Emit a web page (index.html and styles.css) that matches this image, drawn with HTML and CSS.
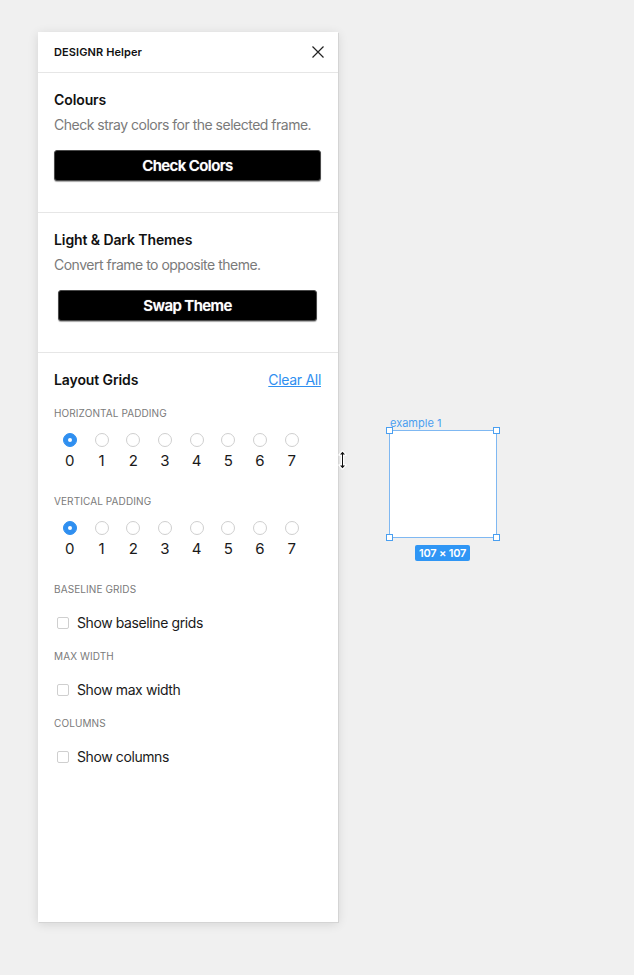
FILE: index.html
```html
<!DOCTYPE html>
<html lang="en">
<head>
  <meta charset="UTF-8" />
  <meta name="viewport" content="width=device-width, initial-scale=1.0" />
  <title>DESIGNR Helper</title>
  <link rel="stylesheet" href="styles.css">
</head>
<body>
  <div class="stage">
    <!-- Plugin panel -->
    <div class="panel">
      <header class="panel-head">
        <span class="panel-title">DESIGNR Helper</span>
        <svg class="close" width="12" height="12" viewBox="0 0 12 12" aria-label="Close">
          <path d="M0.5 0.5 L11.5 11.5 M11.5 0.5 L0.5 11.5" stroke="#222" stroke-width="1.2" fill="none" />
        </svg>
      </header>

      <section class="block">
        <h2>Colours</h2>
        <p class="desc">Check stray colors for the selected frame.</p>
        <button class="btn">Check Colors</button>
      </section>

      <section class="block">
        <h2>Light &amp; Dark Themes</h2>
        <p class="desc">Convert frame to opposite theme.</p>
        <button class="btn narrow">Swap Theme</button>
      </section>

      <section class="block grids">
        <div class="row-head">
          <h2>Layout Grids</h2>
          <a class="link" href="#">Clear All</a>
        </div>

        <div class="label first">Horizontal padding</div>
        <div class="radios">
          <label class="opt"><span class="radio on"></span>0</label>
          <label class="opt"><span class="radio"></span>1</label>
          <label class="opt"><span class="radio"></span>2</label>
          <label class="opt"><span class="radio"></span>3</label>
          <label class="opt"><span class="radio"></span>4</label>
          <label class="opt"><span class="radio"></span>5</label>
          <label class="opt"><span class="radio"></span>6</label>
          <label class="opt"><span class="radio"></span>7</label>
        </div>

        <div class="label">Vertical padding</div>
        <div class="radios">
          <label class="opt"><span class="radio on"></span>0</label>
          <label class="opt"><span class="radio"></span>1</label>
          <label class="opt"><span class="radio"></span>2</label>
          <label class="opt"><span class="radio"></span>3</label>
          <label class="opt"><span class="radio"></span>4</label>
          <label class="opt"><span class="radio"></span>5</label>
          <label class="opt"><span class="radio"></span>6</label>
          <label class="opt"><span class="radio"></span>7</label>
        </div>

        <div class="label">Baseline grids</div>
        <label class="check"><span class="box"></span>Show baseline grids</label>

        <div class="label tight">Max width</div>
        <label class="check"><span class="box"></span>Show max width</label>

        <div class="label tight">Columns</div>
        <label class="check"><span class="box"></span>Show columns</label>
      </section>
    </div>

    <!-- Canvas with the selected frame -->
    <div class="canvas">
      <svg class="cursor" width="9" height="20" viewBox="0 0 9 20">
        <path d="M4.5 1 L8 5 L5.5 5 L5.5 15 L8 15 L4.5 19 L1 15 L3.5 15 L3.5 5 L1 5 Z" fill="#fff" stroke="#fff" stroke-width="1.5" stroke-linejoin="round" />
        <path d="M4.5 1.8 L7 4.6 L5 4.6 L5 15.4 L7 15.4 L4.5 18.2 L2 15.4 L4 15.4 L4 4.6 L2 4.6 Z" fill="#111" />
      </svg>
      <div class="frame-name">example 1</div>
      <div class="frame">
        <span class="handle tl"></span>
        <span class="handle tr"></span>
        <span class="handle bl"></span>
        <span class="handle br"></span>
      </div>
      <div class="size-badge">107 × 107</div>
    </div>
  </div>
</body>
</html>
```

FILE: styles.css
```css
:root {
  --blue: #2f8ff0;
  --line: #e6e6e6;
  --muted: #7a7a7a;
}

* {
  box-sizing: border-box;
}

body {
  margin: 0;
  background: #f0f0f0;
  font-family: Inter, "Helvetica Neue", Arial, sans-serif;
  color: #111;
}

h2,
p {
  margin: 0;
}

/* ----------- LAYOUT ----------- */
.stage {
  display: flex;
  padding: 32px 0 0 38px;
  min-height: 975px;
}

/* --- PANEL --- */
.panel {
  width: 300px;
  height: 890px;
  background: #fff;
  box-shadow: 1px 1px 0 #d4d4d4, 0 2px 10px rgba(0, 0, 0, 0.12);
  flex-shrink: 0;
}

.panel-head {
  height: 41px;
  display: flex;
  align-items: center;
  justify-content: space-between;
  padding: 0 14px 0 16px;
  border-bottom: 1px solid var(--line);
}

.panel-title {
  font-size: 11px;
  font-weight: 600;
  letter-spacing: 0.1px;
}

.block {
  padding: 19px 17px 31px 16px;
  border-bottom: 1px solid var(--line);
}

.block h2 {
  font-size: 14px;
  font-weight: 600;
  line-height: 16px;
  letter-spacing: -0.1px;
}

.desc {
  margin-top: 7px;
  font-size: 14px;
  line-height: 20px;
  letter-spacing: -0.5px;
  white-space: nowrap;
  color: var(--muted);
}

.btn {
  display: block;
  width: 100%;
  height: 31px;
  margin-top: 15px;
  background: #000;
  border: 1px solid #4a4a4a;
  border-radius: 3px;
  box-shadow: 0 1px 1px rgba(0, 0, 0, 0.35);
  color: #fff;
  font-family: inherit;
  font-size: 15px;
  font-weight: 600;
  letter-spacing: -0.6px;
  text-shadow: 0 0 1px #999;
}

.btn.narrow {
  width: calc(100% - 8px);
  margin-left: 4px;
}

/* --- LAYOUT GRIDS --- */
.grids {
  border-bottom: none;
}

.row-head {
  display: flex;
  justify-content: space-between;
  align-items: center;
}

.link {
  font-size: 14px;
  line-height: 16px;
  letter-spacing: -0.3px;
  color: var(--blue);
}

.label {
  margin-top: 25px;
  font-size: 10px;
  line-height: 12px;
  text-transform: uppercase;
  letter-spacing: 0.1px;
  color: var(--muted);
}

.label.first {
  margin-top: 19px;
}

.label.tight {
  margin-top: 17px;
}

.radios {
  display: grid;
  grid-template-columns: repeat(8, 31.7px);
  margin-top: 14px;
}

.opt {
  display: flex;
  flex-direction: column;
  align-items: center;
  gap: 5px;
  font-size: 15px;
  line-height: 18px;
  color: #1a1a1a;
}

.radio {
  position: relative;
  width: 14px;
  height: 14px;
  border-radius: 50%;
  border: 1px solid #cfcfcf;
  background: #fff;
}

.radio.on {
  border-color: var(--blue);
  background: var(--blue);
}

.radio.on::after {
  content: "";
  position: absolute;
  left: 4px;
  top: 4px;
  width: 4px;
  height: 4px;
  border-radius: 50%;
  background: #fff;
}

.check {
  display: flex;
  align-items: center;
  gap: 8px;
  margin-top: 18px;
  padding-left: 3px;
  font-size: 14px;
  line-height: 20px;
  letter-spacing: -0.4px;
  color: #1a1a1a;
}

.box {
  width: 12px;
  height: 12px;
  border: 1px solid #cfcfcf;
  border-radius: 2px;
}

/* --- CANVAS --- */
.canvas {
  position: relative;
  flex: 1;
}

.cursor {
  position: absolute;
  left: 0;
  top: 418px;
}

.frame-name {
  position: absolute;
  left: 52px;
  top: 384px;
  font-size: 11px;
  line-height: 14px;
  color: #4a9ff0;
}

.frame {
  position: absolute;
  left: 51px;
  top: 398px;
  width: 108px;
  height: 108px;
  background: #fff;
  border: 1px solid #7fb8f2;
}

.handle {
  position: absolute;
  width: 7px;
  height: 7px;
  background: #fff;
  border: 1px solid #4a9ff0;
}

.tl { left: -4px; top: -4px; }
.tr { right: -4px; top: -4px; }
.bl { left: -4px; bottom: -4px; }
.br { right: -4px; bottom: -4px; }

.size-badge {
  position: absolute;
  left: 77px;
  top: 513px;
  padding: 0 4px;
  height: 16px;
  line-height: 16px;
  border-radius: 2px;
  background: #2f96f5;
  color: #fff;
  font-size: 11px;
  font-weight: 600;
  letter-spacing: -0.2px;
}
```
